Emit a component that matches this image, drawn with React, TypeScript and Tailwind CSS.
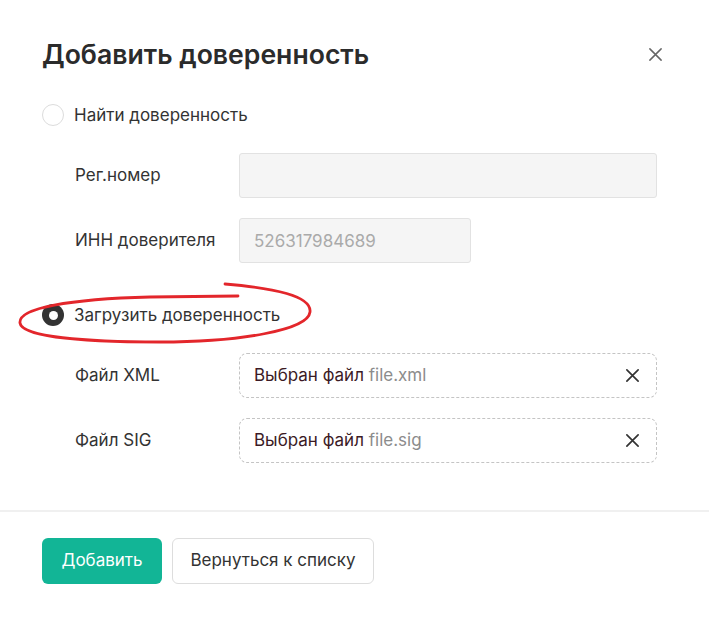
import React, { useState } from "react";

function CloseIcon({ className, width = 1.6 }: { className?: string; width?: number }) {
  return (
    <svg viewBox="0 0 16 16" className={className} fill="none" stroke="currentColor" strokeWidth={width} strokeLinecap="round">
      <path d="M2 2L14 14M14 2L2 14" />
    </svg>
  );
}

function Radio({ checked, label, onClick }: { checked: boolean; label: string; onClick: () => void }) {
  return (
    <button type="button" onClick={onClick} className="flex items-center gap-[10px] text-left">
      {checked ? (
        <span className="flex h-[22px] w-[22px] items-center justify-center rounded-full bg-[#333333]">
          <span className="h-[9px] w-[9px] rounded-full bg-white" />
        </span>
      ) : (
        <span className="h-[22px] w-[22px] rounded-full border border-[#dcdcdc] bg-white" />
      )}
      <span className="text-[17px] leading-[26px] text-[#333333]">{label}</span>
    </button>
  );
}

function FileField({ name, onClear }: { name: string; onClear: () => void }) {
  return (
    <div className="flex h-[45px] w-[418px] items-center justify-between rounded-[8px] border border-dashed border-[#c4c4c4] pl-[14px] pr-[16px]">
      <span className="text-[17px]">
        <span className="text-[#3b1a25]">Выбран файл</span> <span className="text-[#8c8c8c]">{name}</span>
      </span>
      <button type="button" onClick={onClear} className="text-[#333333]">
        <CloseIcon className="h-[15px] w-[15px]" width={1.8} />
      </button>
    </div>
  );
}

export default function App() {
  const [mode, setMode] = useState<"find" | "upload">("upload");

  return (
    <div className="min-h-[619px] w-full bg-white font-['Inter','Liberation_Sans',sans-serif]">
      <div className="flex items-center justify-between pl-[42px] pr-[46px] pt-[38px]">
        <h1 className="text-[26.6px] font-semibold leading-[32px] text-[#2b2b2b]">Добавить доверенность</h1>
        <button type="button" className="text-[#666666]">
          <CloseIcon className="h-[15px] w-[15px]" />
        </button>
      </div>

      <div className="mt-[32px] px-[42px]">
        <Radio checked={mode === "find"} label="Найти доверенность" onClick={() => setMode("find")} />

        <div className="mt-[25px] flex flex-col gap-[20px] pl-[33px]">
          <div className="flex items-center">
            <span className="w-[164px] text-[17px] text-[#333333]">Рег.номер</span>
            <input
              disabled
              className="h-[45px] w-[418px] rounded-[3px] border border-[#e2e2e2] bg-[#f5f5f5] px-[14px] text-[17px]"
            />
          </div>
          <div className="flex items-center">
            <span className="w-[164px] text-[17px] text-[#333333]">ИНН доверителя</span>
            <input
              disabled
              value="526317984689"
              readOnly
              className="h-[45px] w-[232px] rounded-[3px] border border-[#e2e2e2] bg-[#f5f5f5] px-[14px] text-[17px] text-[#aaaaaa]"
            />
          </div>
        </div>

        <div className="relative mt-[39px]">
          <Radio checked={mode === "upload"} label="Загрузить доверенность" onClick={() => setMode("upload")} />
          <svg
            className="pointer-events-none absolute left-[-32px] top-[-20px]"
            width="312"
            height="80"
            viewBox="0 0 312 80"
            fill="none"
          >
            <path
              d="M215 2 C264 6 302 14 300 30 C298 48 230 60 150 60 C75 60 12 55 10 41 C8 26 60 17 140 15 L228 14"
              stroke="#e3262b"
              strokeWidth={2.8}
              strokeLinecap="round"
            />
          </svg>
        </div>

        <div className="mt-[25px] flex flex-col gap-[20px] pl-[33px]">
          <div className="flex items-center">
            <span className="w-[164px] text-[17px] text-[#333333]">Файл XML</span>
            <FileField name="file.xml" onClear={() => {}} />
          </div>
          <div className="flex items-center">
            <span className="w-[164px] text-[17px] text-[#333333]">Файл SIG</span>
            <FileField name="file.sig" onClear={() => {}} />
          </div>
        </div>
      </div>

      <div className="mt-[47px] h-[2px] w-full bg-[#f0f0f0]" />

      <div className="flex gap-[10px] px-[42px] pt-[26px]">
        <button type="button" className="h-[46px] w-[120px] rounded-[6px] bg-[#12b596] text-[17px] text-white">
          Добавить
        </button>
        <button
          type="button"
          className="h-[46px] w-[202px] rounded-[6px] border border-[#dddddd] bg-white text-[17px] text-[#333333]"
        >
          Вернуться к списку
        </button>
      </div>
    </div>
  );
}
